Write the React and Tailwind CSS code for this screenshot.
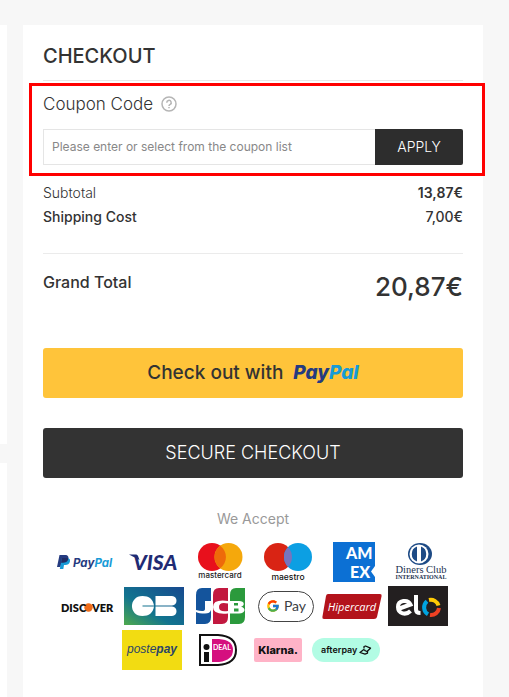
import React, { useState } from 'react';
import { FcGoogle } from 'react-icons/fc';

const PayPalLogo = () => (
  <svg viewBox="0 0 64 40" className="h-10 w-16" role="img" aria-label="PayPal">
    <path d="M5.500 13h5.500c3 0 4 2 3.300 4.200-.7 2.600-2.600 3.600-5.200 3.600H7.500L6.500 25H3z" fill="#253b80" />
    <path d="M8 16h5.500c2.300.2 2.900 1.800 2.400 3.700-.6 2.300-2.300 3.200-4.500 3.200H10L9.300 27H5.800z" fill="#179bd7" />
    <path d="M8 16h5.700c.5.400.7 1 .4 1.800-.7 2-2.500 3-5 3H7z" fill="#222d65" />
    <text x="19" y="25" fontSize="11.500" fontWeight="700" fontStyle="italic" className="font-['Inter',sans-serif]">
      <tspan fill="#253b80">Pay</tspan>
      <tspan fill="#179bd7">Pal</tspan>
    </text>
  </svg>
);

const VisaLogo = () => (
  <svg viewBox="0 0 60 40" className="h-10 w-15" role="img" aria-label="Visa">
    <path d="M5 12.500h7.500l1.500 1.500 1.500 4z" fill="#1f2b74" />
    <text x="9" y="28" fontSize="21" fontWeight="900" fontStyle="italic" fill="#1f2b74" className="font-['Lato',sans-serif]">
      VISA
    </text>
  </svg>
);

const MastercardLogo = () => (
  <svg viewBox="0 0 60 40" className="h-10 w-15" role="img" aria-label="Mastercard">
    <circle cx="22" cy="15" r="14" fill="#e8101c" />
    <circle cx="38.500" cy="15" r="14" fill="#f5a80c" />
    <path d="M30.200 3.700a14 14 0 0 1 0 22.600a14 14 0 0 1 0-22.600z" fill="#ee6a0a" />
    <text x="30" y="36" fontSize="8" fontWeight="500" textAnchor="middle" fill="#222" className="font-['Inter',sans-serif]">
      mastercard
    </text>
  </svg>
);

const MaestroLogo = () => (
  <svg viewBox="0 0 60 40" className="h-10 w-15" role="img" aria-label="Maestro">
    <circle cx="22" cy="15" r="14" fill="#d92414" />
    <circle cx="42" cy="15" r="14" fill="#0c9fe3" />
    <path d="M32 5.200a14 14 0 0 1 0 19.600a14 14 0 0 1 0-19.600z" fill="#7774bd" />
    <text x="32" y="38" fontSize="8.500" fontWeight="500" textAnchor="middle" fill="#111" className="font-['Inter',sans-serif]">
      maestro
    </text>
  </svg>
);

const AmexLogo = () => (
  <svg viewBox="0 0 60 40" className="h-10 w-15" role="img" aria-label="American Express">
    <path d="M11 0h42v40H11z" fill="#0c70d4" />
    <g fill="#fff" fontWeight="900" fontSize="16" className="font-['Lato',sans-serif]">
      <text x="24" y="17">AM</text>
      <text x="28" y="36">EX</text>
    </g>
    <path d="M53 24v11l-4-5.500z" fill="#fff" />
  </svg>
);

const DinersLogo = () => (
  <svg viewBox="0 0 64 40" className="h-10 w-16" role="img" aria-label="Diners Club International">
    <ellipse cx="32" cy="12" rx="12" ry="11" fill="#1d4a85" />
    <circle cx="31" cy="12" r="9.500" fill="#fff" />
    <path d="M29 4.500a8 8 0 0 0 0 15zM33 4.500a8 8 0 0 1 0 15z" fill="#1d4a85" />
    <g fill="#22314f" textAnchor="middle" className="font-['Liberation_Serif',serif]">
      <text x="33" y="31" fontSize="10.500">Diners Club</text>
      <text x="33" y="37" fontSize="6" fontWeight="700">INTERNATIONAL</text>
    </g>
  </svg>
);

const DiscoverLogo = () => (
  <svg viewBox="0 0 60 40" className="h-10 w-15" role="img" aria-label="Discover">
    <circle cx="30.500" cy="21.500" r="4.200" fill="#ef6c1a" />
    <g fill="#111" fontSize="11" fontWeight="800" className="font-['Lato',sans-serif]">
      <text x="3" y="26">DISC</text>
      <text x="34" y="26">VER</text>
    </g>
  </svg>
);

const CbLogo = () => (
  <svg viewBox="0 0 60 40" className="h-10 w-15" role="img" aria-label="CB">
    <defs>
      <linearGradient id="cb" x1="0" y1="1" x2="1" y2="0">
        <stop offset="0" stopColor="#4faa4c" />
        <stop offset="0.400" stopColor="#12748f" />
        <stop offset="1" stopColor="#17498f" />
      </linearGradient>
    </defs>
    <path d="M0 1h60v38H0z" fill="url(#cb)" />
    <path d="M30 19.500C29 13 25 10 18.500 10c-14 0-14 20 0 20C25 30 29 27 30 20.500H18.500v-1z" fill="#fff" />
    <path d="M31.500 10H48c6 0 6 9.500 0 9.500H31.500zM31.500 20.500H48c6 0 6 9.500 0 9.500H31.500z" fill="#fff" />
  </svg>
);

const JcbLogo = () => (
  <svg viewBox="0 0 60 40" className="h-10 w-15" role="img" aria-label="JCB">
    <path d="M12 2h9v29q0 7-6 7H6V9q0-7 6-7z" fill="#14549c" />
    <path d="M29 2h9v29q0 7-6 7h-9V9q0-7 6-7z" fill="#c2183f" />
    <path d="M46 2h9v29q0 7-6 7h-9V9q0-7 6-7z" fill="#2b9a3c" />
    <path d="M15 15h6v9q-1 3.500-6 3.500-6 0-9-1.500v-2q9 2.500 9-1z" fill="#fff" />
    <path d="M38 15v2.500q-9-2-9 3.500t9 4v2.500q-15 1.500-15-6.500t15-6z" fill="#fff" />
    <path d="M40 15h9c6 0 6 5 2 5.800 5 .9 5 6.700-2 6.700h-9z" fill="#fff" />
    <path d="M44 17h4v2.500h-4zM44 22.500h4.500v3H44z" fill="#2b9a3c" />
  </svg>
);

const GPayLogo = () => (
  <span className="flex h-10 w-15 items-center justify-center">
    <span className="flex h-[31px] w-14 items-center justify-center gap-1 rounded-full border border-[#444] bg-white text-sm text-[#3c4043] font-['Lato',sans-serif]">
      <FcGoogle className="h-3.5 w-3.5" aria-label="Google" />
      Pay
    </span>
  </span>
);

const HipercardLogo = () => (
  <svg viewBox="0 0 60 40" className="h-10 w-15" role="img" aria-label="Hipercard">
    <path d="M6 8h52q2 0 1.600 2L55 31q-.500 2-3 2H2q-2 0-1.600-2L4 10q.400-2 2-2z" fill="#b3131b" />
    <text x="30" y="25" fontSize="11" fontWeight="500" fontStyle="italic" textAnchor="middle" fill="#fff" className="font-['Open_Sans',sans-serif]">
      Hipercard
    </text>
  </svg>
);

const EloLogo = () => (
  <svg viewBox="0 0 60 40" className="h-10 w-15" role="img" aria-label="elo">
    <path d="M0 0h60v40H0z" fill="#231f20" />
    <g fill="none" strokeWidth="4">
      <path d="M10 23L22.500 18.500C20 13 10 14 10 21s8 8.500 12.500 4" stroke="#fff" />
      <path d="M28 9v14.500q0 3.500 4.500 3.500" stroke="#fff" />
      <path d="M40 28.300a8 8 0 0 1-1-13" stroke="#00a4e0" />
      <path d="M41 14a8 8 0 0 1 9.500 5.500" stroke="#ffcb05" />
      <path d="M51 22a8 8 0 0 1-9 7" stroke="#ef4123" />
    </g>
  </svg>
);

const PostepayLogo = () => (
  <svg viewBox="0 0 60 40" className="h-10 w-15" role="img" aria-label="Postepay">
    <path d="M0 0h60v40H0z" fill="#f2dc12" />
    <text x="30" y="23" fontSize="12" fontStyle="italic" textAnchor="middle" fill="#2b4567" className="font-['Liberation_Sans',sans-serif]">
      poste<tspan fontWeight="700">pay</tspan>
    </text>
  </svg>
);

const IdealLogo = () => (
  <svg viewBox="0 0 60 40" className="h-10 w-15" role="img" aria-label="iDEAL">
    <path d="M12 5h18q18 1 18 15T30 35H12z" fill="#fff" stroke="#111" strokeWidth="2" />
    <path d="M24 9h7q14 1 14 11T31 32h-7z" fill="#d5107f" />
    <circle cx="18.500" cy="17" r="3" fill="#111" />
    <path d="M16 22h5v10h-5z" fill="#111" />
    <text x="25" y="20" fontSize="7" fontWeight="700" fill="#fff" className="font-['Lato',sans-serif]">
      DEAL
    </text>
  </svg>
);

const KlarnaLogo = () => (
  <svg viewBox="0 0 48 40" className="h-10 w-12" role="img" aria-label="Klarna">
    <rect y="8" width="48" height="24" rx="2" fill="#ffb3c7" />
    <text x="24" y="24" fontSize="11" fontWeight="800" textAnchor="middle" fill="#111" className="font-['Inter',sans-serif]">
      Klarna.
    </text>
  </svg>
);

const AfterpayLogo = () => (
  <svg viewBox="0 0 76 40" className="h-10 w-19" role="img" aria-label="Afterpay">
    <rect x="4" y="8" width="68" height="24" rx="12" fill="#b2fce4" />
    <text x="13" y="23" fontSize="9" fontWeight="600" fill="#111" className="font-['Inter',sans-serif]">
      afterpay
    </text>
    <g fill="none" stroke="#111" strokeWidth="1.300" strokeLinejoin="round">
      <path d="M56 18.500v-2l1.500-.5 5 2.200-3.500 3.300-2.500-1" />
      <path d="M57.500 20.500l-2-.8-3.500 2.800 5 1.700 2.500-1V21" />
    </g>
  </svg>
);

const paymentLogos = [
  PayPalLogo,
  VisaLogo,
  MastercardLogo,
  MaestroLogo,
  AmexLogo,
  DinersLogo,
  DiscoverLogo,
  CbLogo,
  JcbLogo,
  GPayLogo,
  HipercardLogo,
  EloLogo,
  PostepayLogo,
  IdealLogo,
  KlarnaLogo,
  AfterpayLogo,
];

const App = () => {
  const [coupon, setCoupon] = useState('');

  return (
    <div className="flex min-h-screen gap-4 bg-[#f7f7f7] pt-[25px] pr-[26px] text-[#333] font-['Inter',sans-serif]">
      {/* Cart column edge */}
      <div className="flex w-[7px] flex-col gap-[19px]">
        <div className="h-[419px] bg-white" />
        <div className="flex-1 bg-white" />
      </div>

      <main className="min-w-0 flex-1 bg-white px-5 pt-4 pb-6">
        <h1 className="border-b border-[#e8e8e8] pb-[9px] text-xl leading-[30px] font-medium">CHECKOUT</h1>

        {/* Coupon */}
        <form className="relative pt-[11px] pb-4" onSubmit={(e) => e.preventDefault()}>
          <div className="flex items-center gap-2">
            <label htmlFor="coupon" className="text-[17px] leading-6 font-light">
              Coupon Code
            </label>
            <button type="button" aria-label="Coupon help" className="text-[#b5b5b5]">
              <svg viewBox="0 0 16 16" className="h-4 w-4" fill="none" stroke="currentColor" strokeWidth="1.500">
                <circle cx="8" cy="8" r="7" />
                <path d="M5.800 6.700a2.200 2.200 0 1 1 3.400 1.700Q8 9 8 10" />
                <path d="M8 11v1.300" />
              </svg>
            </button>
          </div>
          <div className="mt-[13px] flex h-9">
            <input
              id="coupon"
              type="text"
              value={coupon}
              onChange={(e) => setCoupon(e.target.value)}
              placeholder="Please enter or select from the coupon list"
              className="min-w-0 flex-1 border border-r-0 border-[#e5e5e5] px-2 text-xs placeholder:text-[#888]"
            />
            <button type="submit" className="w-[88px] rounded-r-xs bg-[#2d2d2d] text-sm font-light text-white">
              APPLY
            </button>
          </div>
          <div className="pointer-events-none absolute top-0.5 -right-[22px] bottom-[5px] -left-[14px] border-3 border-[#ff0000]" />
        </form>

        {/* Totals */}
        <dl className="border-b border-[#ebebeb] pb-6 text-sm leading-6">
          <div className="flex justify-between">
            <dt className="font-light">Subtotal</dt>
            <dd className="font-semibold">13,87€</dd>
          </div>
          <div className="flex justify-between font-medium">
            <dt>Shipping Cost</dt>
            <dd>7,00€</dd>
          </div>
        </dl>
        <div className="flex justify-between pt-4">
          <span className="text-base leading-6 font-medium">Grand Total</span>
          <span className="text-[26px] leading-[34px] font-medium">20,87€</span>
        </div>

        <button
          type="button"
          className="mt-11 flex h-[50px] w-full items-center justify-center gap-2.5 rounded-[3px] bg-[#ffc43a] text-[19px]"
        >
          <span className="font-medium">Check out with</span>
          <span className="font-extrabold text-[#253b80] italic">
            Pay<span className="text-[#179bd7]">Pal</span>
          </span>
        </button>
        <button type="button" className="mt-[30px] h-[50px] w-full rounded-[3px] bg-[#333] text-lg font-light text-white">
          SECURE CHECKOUT
        </button>

        {/* Accepted payments */}
        <p className="mt-[29px] text-center text-sm leading-6 text-[#999]">We Accept</p>
        <div className="mt-[11px] flex flex-wrap justify-center gap-x-1.5 gap-y-1">
          {paymentLogos.map((Logo, i) => (
            <Logo key={i} />
          ))}
        </div>
      </main>
    </div>
  );
};

export default App;
